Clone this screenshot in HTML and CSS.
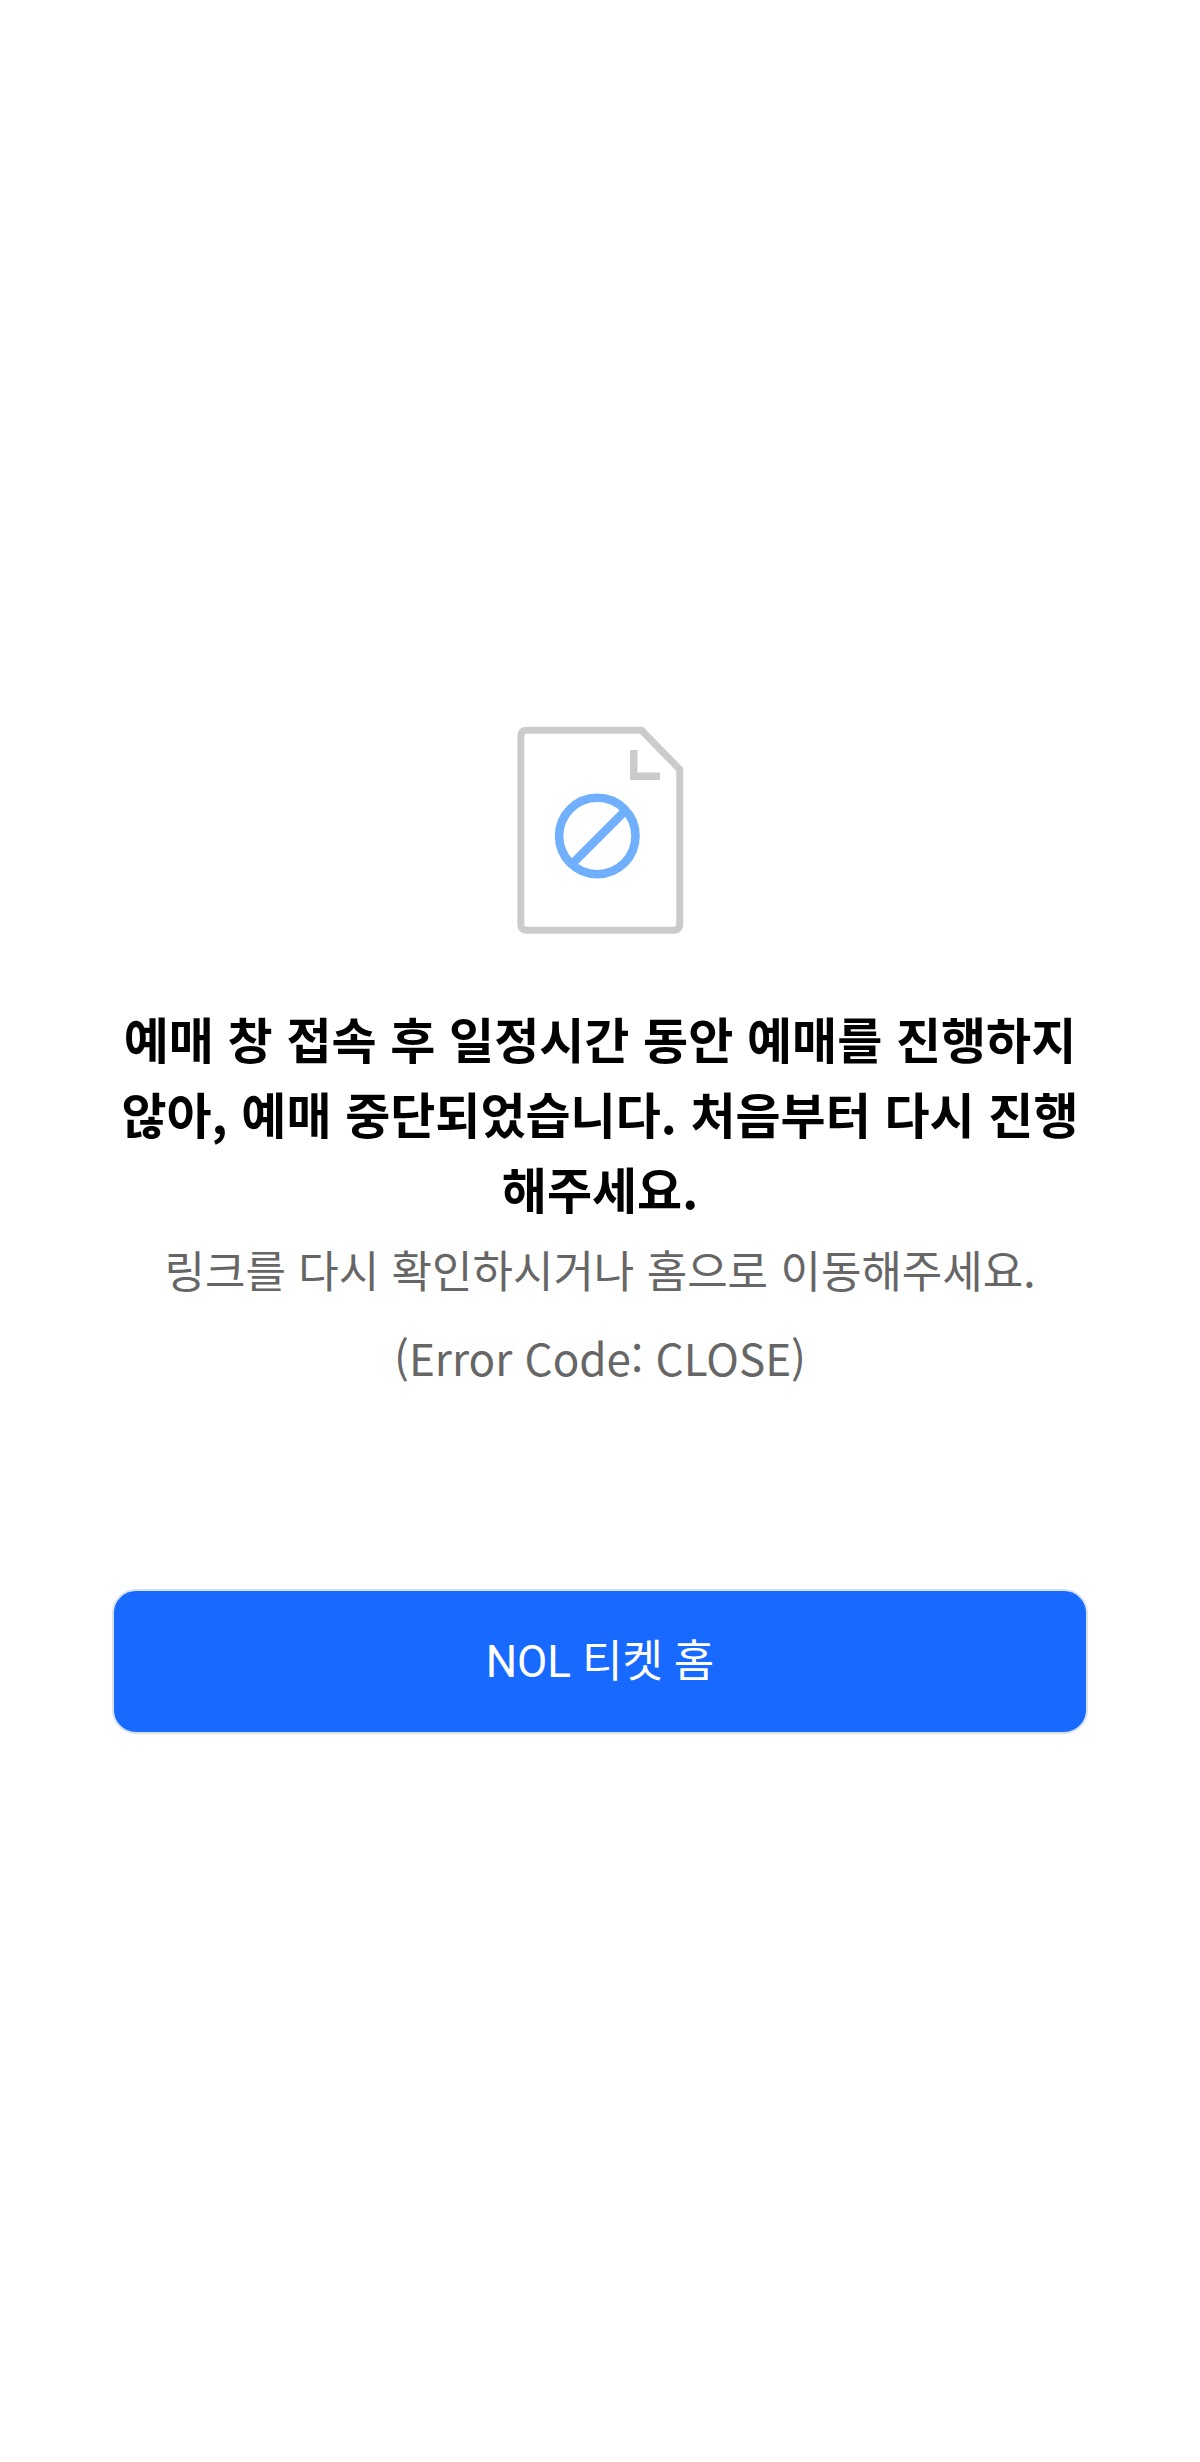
FILE: index.html
```html
<!DOCTYPE html>
<html lang="ko">
<head>
<meta charset="utf-8">
<meta name="viewport" content="width=device-width, initial-scale=1">
<title>NOL 티켓</title>
<link rel="stylesheet" href="styles.css">
</head>
<body>
<main class="error-page">
  <svg class="error-icon" viewBox="0 0 168 208" fill="none" aria-hidden="true">
    <path d="M11 4.3H125.5L163.8 43.5V198Q163.8 204.3 157.5 204.3H11Q4.8 204.3 4.8 198V10.5Q4.8 4.3 11 4.3Z" stroke="#cbcbcb" stroke-width="7"/>
    <path d="M117.8 24V50.3H144" stroke="#cbcbcb" stroke-width="7.4"/>
    <circle cx="81.3" cy="110" r="38.2" stroke="#70affc" stroke-width="8.6"/>
    <path d="M56 138L108 86" stroke="#70affc" stroke-width="8.6"/>
  </svg>
  <h1 class="error-title">예매 창 접속 후 일정시간 동안 예매를 진행하지 않아, 예매 중단되었습니다. 처음부터 다시 진행해주세요.</h1>
  <p class="error-text">링크를 다시 확인하시거나 홈으로 이동해주세요.</p>
  <p class="error-text">(Error Code: CLOSE)</p>
  <button class="home-button" type="button">NOL 티켓 홈</button>
</main>
</body>
</html>
```
FILE: styles.css
```css
* { box-sizing: border-box; }
body {
  margin: 0;
  background: #fff;
  font-family: "Noto Sans CJK KR", sans-serif;
}
.error-page {
  min-height: 100vh;
  padding: 0 112px 2px;
  display: flex;
  flex-direction: column;
  align-items: center;
  justify-content: center;
  text-align: center;
}
.error-icon { width: 168px; height: 208px; margin-bottom: 66px; }
.error-title {
  margin: 0;
  font-size: 49px;
  line-height: 75px;
  font-weight: 700;
  color: #000;
}
.error-text {
  margin: 0;
  font-size: 44px;
  line-height: 88px;
  color: #666;
}
.home-button {
  width: 100%;
  height: 145px;
  margin-top: 188px;
  padding: 0 8px 8px;
  border: 2px solid #d5e2f5;
  border-radius: 24px;
  background: #1769ff;
  color: #fff;
  font-family: Roboto, "Noto Sans CJK KR", sans-serif;
  font-size: 44px;
}
```
